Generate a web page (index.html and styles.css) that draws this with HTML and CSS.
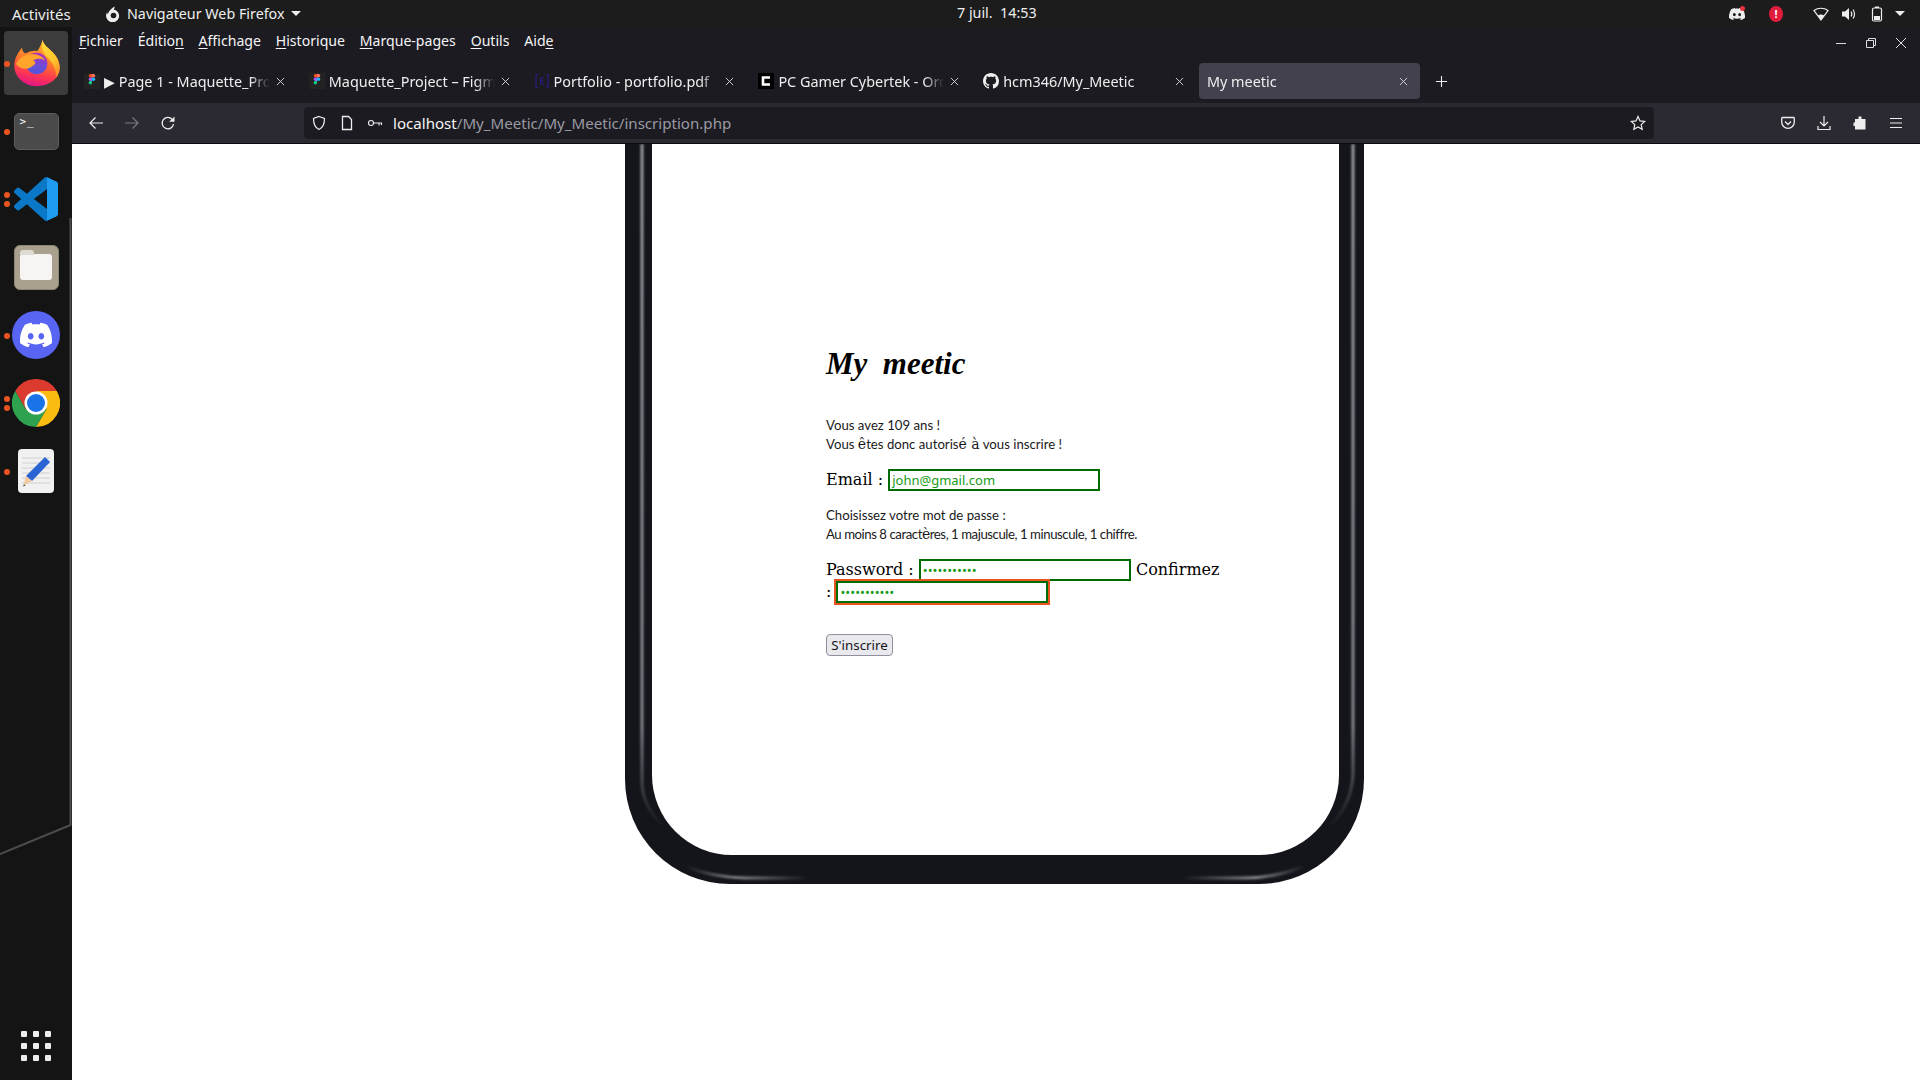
FILE: index.html
```html
<!DOCTYPE html>
<html lang="fr">
<head>
  <meta charset="UTF-8">
  <title>My meetic</title>
  <link rel="stylesheet" href="styles.css">
</head>
<body>

  <svg class="defs" width="0" height="0">
    <defs>
      <path id="discord" d="M20.317 4.3698a19.7913 19.7913 0 00-4.8851-1.5152.0741.0741 0 00-.0785.0371c-.211.3753-.4447.8648-.6083 1.2495-1.8447-.2762-3.68-.2762-5.4868 0-.1636-.3933-.4058-.8742-.6177-1.2495a.077.077 0 00-.0785-.037 19.7363 19.7363 0 00-4.8852 1.515.0699.0699 0 00-.0321.0277C.5334 9.0458-.319 13.5799.0992 18.0578a.0824.0824 0 00.0312.0561c2.0528 1.5076 4.0413 2.4228 5.9929 3.0294a.0777.0777 0 00.0842-.0276c.4616-.6304.8731-1.2952 1.226-1.9942a.076.076 0 00-.0416-.1057c-.6528-.2476-1.2743-.5495-1.8722-.8923a.077.077 0 01-.0076-.1277c.1258-.0943.2517-.1923.3718-.2914a.0743.0743 0 01.0776-.0105c3.9278 1.7933 8.18 1.7933 12.0614 0a.0739.0739 0 01.0785.0095c.1202.099.246.1981.3728.2924a.077.077 0 01-.0066.1276 12.2986 12.2986 0 01-1.873.8914.0766.0766 0 00-.0407.1067c.3604.698.7719 1.3628 1.225 1.9932a.076.076 0 00.0842.0286c1.961-.6067 3.9495-1.5219 6.0023-3.0294a.077.077 0 00.0313-.0552c.5004-5.177-.8382-9.6739-3.5485-13.6604a.061.061 0 00-.0312-.0286zM8.02 15.3312c-1.1825 0-2.1569-1.0857-2.1569-2.419 0-1.3332.9555-2.4189 2.157-2.4189 1.2108 0 2.1757 1.0952 2.1568 2.419 0 1.3332-.9555 2.4189-2.1569 2.4189zm7.9748 0c-1.1825 0-2.1569-1.0857-2.1569-2.419 0-1.3332.9554-2.4189 2.1569-2.4189 1.2108 0 2.1757 1.0952 2.1568 2.419 0 1.3332-.946 2.4189-2.1568 2.4189Z"/>
      <symbol id="croix" viewBox="0 0 10 10"><path stroke="#ddd" stroke-width="1" d="M1 1l8 8M9 1L1 9"/></symbol>
      <symbol id="figma" viewBox="0 0 16 16"><rect width="16" height="16" fill="#232323"/><path fill="#f24e1e" d="M8 1H6.500a1.700 1.700 0 0 0 0 3.500H8z"/><path fill="#ff7262" d="M8 1h1.500a1.700 1.700 0 0 1 0 3.500H8z"/><path fill="#a259ff" d="M8 4.500H6.500a1.700 1.700 0 0 0 0 3.500H8z"/><circle cx="9.500" cy="6.250" r="1.700" fill="#1abcfe"/><path fill="#0acf83" d="M8 8H6.500a1.700 1.700 0 1 0 1.500 1.750z"/></symbol>
    </defs>
  </svg>

  <div class="topbar">
    <span class="activites">Activités</span>
    <span class="appmenu">
      <svg class="appmenu-ico" viewBox="0 0 16 16"><path fill="#eee" d="M9.500 .5c.2 1.500-.3 2.300-.8 2.900A6.500 6.500 0 1 1 2 6.500c.2.700.6 1.200 1 1.500C3.500 5 6.500 2.500 9.500.5z"/><circle cx="8.500" cy="9.500" r="2.800" fill="#1c1c1c"/></svg>
      Navigateur Web Firefox
      <i class="caret"></i>
    </span>
    <span class="clock">7 juil.&nbsp; 14:53</span>
    <span class="status">
      <span class="st-discord">
        <svg viewBox="0 0 24 24"><use href="#discord" fill="#eee"/></svg>
        <i class="st-dot"></i>
      </span>
      <span class="st-alert">!</span>
      <svg class="st-ico" viewBox="0 0 16 16"><path fill="none" stroke="#eee" stroke-width="1.200" d="M1 4.500C5 1.500 11 1.500 15 4.500L8 14z"/><path fill="#eee" d="M4.800 9.500C7 8 9 8 11.200 9.500L8 14z"/></svg>
      <svg class="st-ico" viewBox="0 0 16 16"><path fill="#eee" d="M1 5.500h3L8 2v12L4 10.500H1z"/><path fill="none" stroke="#eee" stroke-width="1.200" d="M10 5.500c1 1.500 1 3.500 0 5M12 3.500c2 2.500 2 6.500 0 9"/></svg>
      <svg class="st-ico st-last" viewBox="0 0 16 16"><rect x="3.500" y="2" width="9" height="13" rx="1.500" fill="none" stroke="#eee" stroke-width="1.200"/><rect x="6" y="0.500" width="4" height="1.500" fill="#eee"/><rect x="5" y="10" width="6" height="4" fill="#eee"/></svg>
      <i class="caret"></i>
    </span>
  </div>

  <div class="desk">

    <div class="dock">
      <div class="dock-item dock-active">
        <i class="run"></i>
        <svg class="ico-firefox" viewBox="0 0 64 58">
          <defs>
            <linearGradient id="ffbody" x1="0.650" y1="0" x2="0.400" y2="1">
              <stop offset="0" stop-color="#ffb52e"/>
              <stop offset="0.450" stop-color="#ff7a2a"/>
              <stop offset="0.750" stop-color="#ff3750"/>
              <stop offset="1" stop-color="#e31587"/>
            </linearGradient>
            <linearGradient id="ffcroissant" x1="0.300" y1="0" x2="0.600" y2="1">
              <stop offset="0" stop-color="#ffd83a"/>
              <stop offset="0.600" stop-color="#ffc52e"/>
              <stop offset="1" stop-color="#ff8a2a"/>
            </linearGradient>
            <linearGradient id="ffglobe" x1="0.600" y1="0" x2="0.400" y2="1">
              <stop offset="0" stop-color="#b02cc0"/>
              <stop offset="0.600" stop-color="#6a4fd8"/>
              <stop offset="1" stop-color="#4f55dc"/>
            </linearGradient>
          </defs>
          <path fill="url(#ffbody)" d="M38 2C38 8 46 12 51 18C59 27 60 38 54 46C48 53 40 56 31 56C16 56 5 45 5 32C5 25 8 19 14 11C14 15 16 17 18 18C22 15 28 14 32 15C36 9 37 5 38 2Z"/>
          <path fill="url(#ffcroissant)" d="M38 2C38 8 46 12 51 18C59 27 60 38 54 46C54 38 50 28 43 22C38 18 36 10 38 2Z"/>
          <circle cx="31" cy="29.500" r="12.500" fill="url(#ffglobe)"/>
          <path fill="#ffa52c" d="M7 30C10 24 16 19 23 19C30 18 37 20 41 26C36 23 30 24 27 26C30 27 30 30 28 31C24 35 19 37 14 35C10 34 8 32 7 30Z"/>
        </svg>
      </div>
      <div class="dock-item">
        <i class="run"></i>
        <div class="ico-terminal">&gt;_</div>
      </div>
      <div class="dock-item">
        <i class="run run-double"></i>
        <svg class="ico-vscode" viewBox="0 0 100 100">
          <path fill="#0a78c6" fill-rule="evenodd" d="M70.900 99.300a6.200 6.200 0 0 0 5-.2l20.600-9.900a6.300 6.300 0 0 0 3.500-5.600V16.400a6.300 6.300 0 0 0-3.500-5.600L75.900.9a6.200 6.200 0 0 0-7.100 1.200L29.400 38.100 12.200 25a4.200 4.200 0 0 0-5.300.2l-5.500 5a4.200 4.200 0 0 0 0 6.200L16.300 50 1.400 63.600a4.200 4.200 0 0 0 0 6.200l5.500 5a4.200 4.200 0 0 0 5.300.2l17.200-13.100 39.400 36a6.200 6.200 0 0 0 2.100 1.400zM75 27.300 45.100 50 75 72.700V27.300z"/>
          <path fill="#1f9cf0" d="M75 .4l21.500 10.400a6.300 6.300 0 0 1 3.500 5.600v67.200a6.300 6.300 0 0 1-3.500 5.600L75 99.600z"/>
        </svg>
      </div>
      <div class="dock-item">
        <div class="ico-files"><div class="ico-folder"></div></div>
      </div>
      <div class="dock-item">
        <i class="run"></i>
        <div class="ico-discord">
          <svg viewBox="0 0 24 24"><use href="#discord" fill="#fff"/></svg>
        </div>
      </div>
      <div class="dock-item">
        <i class="run run-double"></i>
        <svg class="ico-chrome" viewBox="0 0 48 48">
          <path fill="#db3a2f" d="M3.200 12A24 24 0 0 1 44.800 12H24L13.600 30z"/>
          <path fill="#fbbc12" d="M44.800 12A24 24 0 0 1 24 48L34.400 30 24 12z"/>
          <path fill="#2fa24f" d="M24 48A24 24 0 0 1 3.200 12L13.600 30H34.400z"/>
          <circle cx="24" cy="24" r="11.500" fill="#fff"/>
          <circle cx="24" cy="24" r="9" fill="#1a73e8"/>
        </svg>
      </div>
      <div class="dock-item">
        <i class="run"></i>
        <svg class="ico-editor" viewBox="0 0 36 44">
          <rect width="36" height="44" rx="4" fill="#f1f1f1"/>
          <path stroke="#cfcfcf" stroke-width="1" d="M4 9h28M4 14h28M4 19h28M4 24h28M4 29h28M4 34h28"/>
          <path fill="#2a63d4" d="M27 8l5 5-18 19-6-5z"/>
          <path fill="#f2c9a0" d="M8 27l6 5-9 5z"/>
          <path fill="#333" d="M6.500 35.500l-2 2 3-1z"/>
        </svg>
      </div>
      <div class="dock-apps">
        <i></i><i></i><i></i><i></i><i></i><i></i><i></i><i></i><i></i>
      </div>
      <svg class="dock-edge" viewBox="0 0 72 1053"><path fill="none" stroke="#4c4c4c" stroke-width="2" d="M70.500 191V798L0 827"/></svg>
    </div>

    <div class="firefox">

      <div class="menubar">
        <span class="menu-item"><u>F</u>ichier</span>
        <span class="menu-item">Éditio<u>n</u></span>
        <span class="menu-item"><u>A</u>ffichage</span>
        <span class="menu-item"><u>H</u>istorique</span>
        <span class="menu-item"><u>M</u>arque-pages</span>
        <span class="menu-item"><u>O</u>utils</span>
        <span class="menu-item">Aid<u>e</u></span>
        <span class="winctl">
          <svg viewBox="0 0 12 12"><path stroke="#ddd" d="M1 6.500h10"/></svg>
          <svg viewBox="0 0 12 12"><path fill="none" stroke="#ddd" d="M1.500 3.500h7v7h-7zM3.500 3.500v-2h7v7h-2"/></svg>
          <svg viewBox="0 0 12 12"><path stroke="#ddd" d="M1 1l10 10M11 1L1 11"/></svg>
        </span>
      </div>

      <div class="tabs">
        <div class="tab">
          <svg class="fav"><use href="#figma"/></svg>
          <span class="tab-title">▶ Page 1 - Maquette_Project</span>
          <svg class="tab-close"><use href="#croix"/></svg>
        </div>
        <div class="tab">
          <svg class="fav"><use href="#figma"/></svg>
          <span class="tab-title">Maquette_Project – Figma</span>
          <svg class="tab-close"><use href="#croix"/></svg>
        </div>
        <div class="tab">
          <svg class="fav" viewBox="0 0 16 16"><path fill="none" stroke="#2a1f8f" d="M4 1.500H2v13h2M12 1.500h2v13h-2M10 5H6.500v6H10M6.500 8h3"/></svg>
          <span class="tab-title">Portfolio - portfolio.pdf</span>
          <svg class="tab-close"><use href="#croix"/></svg>
        </div>
        <div class="tab">
          <svg class="fav" viewBox="0 0 16 16"><rect width="16" height="16" fill="#000"/><path fill="none" stroke="#fff" stroke-width="2.600" d="M12 4.500H5v7h7"/></svg>
          <span class="tab-title">PC Gamer Cybertek - Ordinateur</span>
          <svg class="tab-close"><use href="#croix"/></svg>
        </div>
        <div class="tab">
          <svg class="fav" viewBox="0 0 16 16"><path fill="#eee" d="M8 0C3.580 0 0 3.580 0 8c0 3.540 2.290 6.530 5.470 7.590.4.070.55-.17.55-.38 0-.19-.01-.82-.01-1.490-2.010.37-2.530-.49-2.690-.94-.09-.23-.48-.94-.82-1.130-.28-.15-.68-.52-.01-.53.63-.01 1.080.58 1.230.82.72 1.210 1.870.87 2.330.66.07-.52.28-.87.51-1.070-1.780-.2-3.640-.89-3.640-3.950 0-.87.31-1.590.82-2.150-.08-.2-.36-1.020.08-2.120 0 0 .67-.21 2.200.82.64-.18 1.320-.27 2-.27.68 0 1.360.09 2 .27 1.530-1.040 2.200-.82 2.200-.82.44 1.100.16 1.920.08 2.120.51.56.82 1.270.82 2.150 0 3.070-1.870 3.750-3.650 3.950.29.25.54.73.54 1.480 0 1.070-.01 1.930-.01 2.200 0 .21.15.46.55.38A8.013 8.013 0 0016 8c0-4.420-3.580-8-8-8z"/></svg>
          <span class="tab-title">hcm346/My_Meetic</span>
          <svg class="tab-close"><use href="#croix"/></svg>
        </div>
        <div class="tab tab-active">
          <span class="tab-title">My meetic</span>
          <svg class="tab-close"><use href="#croix"/></svg>
        </div>
        <svg class="tab-new" viewBox="0 0 14 14"><path stroke="#eee" stroke-width="1.200" d="M7 1v12M1 7h12"/></svg>
      </div>

      <div class="navbar">
        <svg class="nav-ico" viewBox="0 0 16 16"><path fill="none" stroke="#eee" stroke-width="1.200" d="M15 8H2M7.500 2.500L2 8l5.500 5.500"/></svg>
        <svg class="nav-ico nav-off" viewBox="0 0 16 16"><path fill="none" stroke="#eee" stroke-width="1.200" d="M1 8h13M8.500 2.500L14 8l-5.500 5.500"/></svg>
        <svg class="nav-ico" viewBox="0 0 16 16"><path fill="none" stroke="#eee" stroke-width="1.300" d="M13.500 9a5.700 5.700 0 1 1-1.500-4.800l1.500 1.500"/><path fill="#eee" d="M14.500 1.500v5.300H9.200z"/></svg>
        <div class="urlbar">
          <svg class="url-ico" viewBox="0 0 16 16"><path fill="none" stroke="#eee" stroke-width="1.200" d="M8 1.500l5.500 2c0 5-1 9-5.500 11-4.500-2-5.500-6-5.500-11z"/></svg>
          <svg class="url-ico" viewBox="0 0 16 16"><path fill="none" stroke="#eee" stroke-width="1.300" d="M3.500 1.500h6l3 3v10h-9z"/></svg>
          <svg class="url-ico" viewBox="0 0 16 16"><circle cx="4" cy="8" r="2.500" fill="none" stroke="#eee" stroke-width="1.100"/><path fill="none" stroke="#eee" stroke-width="1.100" d="M6.500 8H15M12 8v2.500M14.500 8v2"/></svg>
          <span class="url"><b>localhost</b>/My_Meetic/My_Meetic/inscription.php</span>
          <svg class="url-star" viewBox="0 0 16 16"><path fill="none" stroke="#eee" stroke-width="1.200" d="M8 1.500l2 4.400 4.700.5-3.500 3.200 1 4.700L8 11.900l-4.200 2.400 1-4.700L1.300 6.400 6 5.900z"/></svg>
        </div>
        <div class="nav-right">
          <svg class="nav-ico" viewBox="0 0 16 16"><path fill="none" stroke="#eee" stroke-width="1.300" d="M2.500 2.500h11c.5 0 .8.300.8.800V7a6.300 6.300 0 0 1-12.600 0V3.300c0-.5.300-.8.800-.8z"/><path fill="none" stroke="#eee" stroke-width="1.300" d="M5 6.500L8 9.500l3-3"/></svg>
          <svg class="nav-ico" viewBox="0 0 16 16"><path fill="none" stroke="#eee" stroke-width="1.200" d="M8 1v10M4 7l4 4 4-4M2 11v3.500h12V11"/></svg>
          <svg class="nav-ico" viewBox="0 0 16 16"><path fill="#eee" d="M6.500 1.500h3v2.500h4v10.500H3V11H1.500V7.500H3V4h3.500z"/></svg>
          <svg class="nav-ico" viewBox="0 0 16 16"><path stroke="#eee" stroke-width="1.200" d="M2 3.500h12M2 8h12M2 12.500h12"/></svg>
        </div>
      </div>

      <div class="page">
        <div class="phone">
          <svg class="reflets" viewBox="0 0 739 740">
            <defs>
              <linearGradient id="refletV" gradientUnits="userSpaceOnUse" x1="0" y1="0" x2="0" y2="685">
                <stop offset="0" stop-color="#9a9aa2"/>
                <stop offset="0.850" stop-color="#85858e"/>
                <stop offset="1" stop-color="#85858e" stop-opacity="0"/>
              </linearGradient>
              <linearGradient id="refletH" gradientUnits="userSpaceOnUse" x1="60" y1="0" x2="680" y2="0">
                <stop offset="0" stop-color="#8a8a92" stop-opacity="0"/>
                <stop offset="0.080" stop-color="#8a8a92"/>
                <stop offset="0.200" stop-color="#8a8a92" stop-opacity="0"/>
                <stop offset="0.800" stop-color="#8a8a92" stop-opacity="0"/>
                <stop offset="0.920" stop-color="#8a8a92"/>
                <stop offset="1" stop-color="#8a8a92" stop-opacity="0"/>
              </linearGradient>
            </defs>
            <path class="reflet" stroke="url(#refletV)" d="M17 0V640Q18 662 38 682M728 0V630Q727 660 705 682"/>
            <path class="reflet" stroke="url(#refletH)" d="M60 722Q85 733 120 734H620Q650 734 680 722"/>
          </svg>
          <div class="ecran">
            <h1 class="logo">My&nbsp; meetic</h1>
            <p class="texte">Vous avez 109 ans !<br>Vous <span class="glyphe">ê</span>tes donc autoris<span class="glyphe">é à</span> vous inscrire !</p>
            <form class="formulaire" action="#">
              <div class="ligne">
                <label for="email">Email :</label>
                <input id="email" class="champ" type="text" value="john@gmail.com">
              </div>
              <p class="texte">Choisissez votre mot de passe :<br><span class="serre">Au moins 8 caract<span class="glyphe">è</span>res, 1 majuscule, 1 minuscule, 1 chiffre.</span></p>
              <div class="ligne ligne-mdp">
                <label for="mdp">Password :</label>
                <input id="mdp" class="champ" type="password" value="azertyuiop1">
                <label for="mdp2">Confirmez :</label>
                <input id="mdp2" class="champ champ-focus" type="password" value="azertyuiop1">
              </div>
              <button class="valider" type="button">S'inscrire</button>
            </form>
          </div>
        </div>
      </div>

    </div>
  </div>

</body>
</html>
```

FILE: styles.css
```css
* {
  margin: 0;
  padding: 0;
  box-sizing: border-box;
}

body {
  width: 1920px;
  height: 1080px;
  overflow: hidden;
  display: flex;
  flex-direction: column;
  font-family: "Noto Sans", sans-serif;
  font-size: 14.3px;
  color: #eee;
  background: #fff;
}

.defs {
  position: absolute;
}

/* barre du haut */
.topbar {
  height: 27px;
  flex: none;
  background: #1c1c1c;
  display: flex;
  align-items: center;
  position: relative;
  padding-left: 12px;
}

.activites {
  width: 93px;
  font-size: 15px;
}

.appmenu {
  display: flex;
  align-items: center;
  gap: 6px;
}

.appmenu-ico {
  width: 16px;
  height: 16px;
}

.caret {
  display: inline-block;
  width: 0;
  height: 0;
  border-left: 5px solid transparent;
  border-right: 5px solid transparent;
  border-top: 5px solid #eee;
}

.clock {
  position: absolute;
  left: 957px;
  top: 3px;
}

.status {
  margin-left: auto;
  display: flex;
  align-items: center;
  padding-right: 15px;
}

.st-discord {
  position: relative;
  width: 16px;
  height: 16px;
  margin-right: 24px;
}

.st-discord svg {
  display: block;
}

.st-dot {
  position: absolute;
  right: 0;
  top: 0;
  width: 5px;
  height: 5px;
  border-radius: 50%;
  background: #e8323c;
}

.st-alert {
  width: 14px;
  height: 16px;
  border-radius: 50%;
  background: #e01b3c;
  color: #fff;
  font-size: 11px;
  font-weight: 700;
  line-height: 16px;
  text-align: center;
  margin-right: 30px;
}

.st-ico {
  width: 16px;
  height: 16px;
  margin-right: 12px;
}

.st-last {
  margin-right: 10px;
}

/* dock */
.desk {
  flex: 1;
  display: flex;
  min-height: 0;
}

.dock {
  width: 72px;
  flex: none;
  background: #141414;
  display: flex;
  flex-direction: column;
  position: relative;
  padding-top: 2px;
}

.dock-item {
  height: 68px;
  flex: none;
  display: flex;
  align-items: center;
  justify-content: center;
  position: relative;
}

.dock-active::before {
  content: "";
  position: absolute;
  left: 4px;
  right: 4px;
  top: 2px;
  bottom: 2px;
  background: #3c3c3c;
  border-radius: 4px;
}

.run {
  position: absolute;
  left: 4px;
  top: 32px;
  width: 6px;
  height: 6px;
  border-radius: 50%;
  background: #e95420;
  z-index: 1;
}

.run-double {
  top: 27px;
  box-shadow: 0 9px 0 #e95420;
}

.ico-firefox {
  width: 55px;
  height: 50px;
  margin-left: 3px;
  position: relative;
}

.ico-terminal {
  width: 45px;
  height: 37px;
  background: #4a4a4a;
  border: 1px solid #5c5c5c;
  border-radius: 5px;
  font-family: "DejaVu Sans Mono", monospace;
  font-size: 11px;
  line-height: 15px;
  padding-left: 5px;
  color: #fff;
  letter-spacing: 1px;
}

.ico-vscode {
  width: 44px;
  height: 44px;
}

.ico-files {
  width: 45px;
  height: 45px;
  background: #a9a18e;
  border: 1px solid #8d8776;
  border-radius: 6px;
  display: flex;
  align-items: center;
  justify-content: center;
}

.ico-folder {
  width: 32px;
  height: 26px;
  background: #f6f5f3;
  border-radius: 3px;
  position: relative;
}

.ico-folder::before {
  content: "";
  position: absolute;
  left: 0;
  top: -4px;
  width: 14px;
  height: 5px;
  background: #dedbd2;
  border-radius: 3px 3px 0 0;
}

.ico-discord {
  width: 48px;
  height: 48px;
  border-radius: 50%;
  background: #5865f2;
  display: flex;
  align-items: center;
  justify-content: center;
}

.ico-discord svg {
  width: 32px;
  height: 32px;
}

.ico-chrome {
  width: 48px;
  height: 48px;
}

.ico-editor {
  width: 36px;
  height: 44px;
}

.dock-apps {
  margin-top: auto;
  margin-bottom: 19px;
  align-self: center;
  display: grid;
  grid-template-columns: repeat(3, 6px);
  gap: 6px;
}

.dock-apps i {
  display: block;
  width: 6px;
  height: 6px;
  border-radius: 1px;
  background: #eee;
}

.dock-edge {
  position: absolute;
  left: 0;
  top: 0;
  width: 72px;
  height: 1053px;
  pointer-events: none;
}

/* fenetre firefox */
.firefox {
  flex: 1;
  display: flex;
  flex-direction: column;
  min-width: 0;
}

.menubar {
  height: 35px;
  flex: none;
  background: #1c1b22;
  display: flex;
  align-items: center;
  padding: 0 0 8px 7px;
  gap: 14.8px;
  font-size: 14.1px;
  color: #f5f5f5;
}

.menu-item u {
  text-underline-offset: 2px;
}

.winctl {
  margin: 5px 0 0 auto;
  display: flex;
  gap: 18px;
  padding-right: 13px;
}

.winctl svg {
  width: 12px;
  height: 12px;
}

.tabs {
  height: 41px;
  flex: none;
  background: #1c1b22;
  display: flex;
  align-items: flex-start;
  padding-left: 3px;
  padding-top: 1px;
  font-size: 14.4px;
}

.tab {
  width: 224.8px;
  height: 36px;
  display: flex;
  align-items: center;
  padding: 0 9px;
  border-radius: 4px;
}

.tab-active {
  width: 221px;
  padding-left: 8px;
  background: #42414d;
}

.fav {
  width: 16px;
  height: 16px;
  flex: none;
  margin-right: 4px;
}

.tab-title {
  width: 166px;
  white-space: nowrap;
  overflow: hidden;
  -webkit-mask-image: linear-gradient(to right, #000 88%, transparent);
  mask-image: linear-gradient(to right, #000 88%, transparent);
}

.tab-close {
  width: 9px;
  height: 9px;
  margin-left: auto;
  margin-right: 6px;
}

.tab-active .tab-title {
  width: 170px;
}

.tab-active .tab-close {
  margin-right: 3px;
}

.tab-new {
  width: 13px;
  height: 13px;
  margin: 12px 0 0 15px;
}

.navbar {
  height: 41px;
  flex: none;
  background: #2b2a33;
  border-bottom: 1px solid #0c0c0d;
  display: flex;
  align-items: center;
  padding-left: 16px;
}

.nav-ico {
  width: 16px;
  height: 16px;
  flex: none;
  margin-right: 20px;
}

.nav-off {
  opacity: 0.4;
}

.urlbar {
  width: 1350px;
  height: 32px;
  flex: none;
  margin-left: 108px;
  background: #1c1b22;
  border-radius: 4px;
  display: flex;
  align-items: center;
  padding-left: 7px;
}

.url-ico {
  width: 16px;
  height: 16px;
  margin-right: 12px;
}

.url {
  font-size: 15.1px;
  color: #9a9aa2;
  margin-left: -2px;
}

.url b {
  font-weight: 400;
  color: #f5f5f5;
}

.url-star {
  width: 16px;
  height: 16px;
  margin-left: auto;
  margin-right: 8px;
}

.nav-right {
  display: flex;
  margin-left: 126px;
}

.nav-right .nav-ico:last-child {
  margin-right: 0;
}

/* page */
.page {
  flex: 1;
  background: #fff;
  display: flex;
  justify-content: center;
  padding-right: 3px;
  min-height: 0;
  color: #000;
}

.phone {
  width: 739px;
  height: 740px;
  background: #14141b;
  padding: 0 25px 29px 27px;
  border-radius: 0 0 105px 105px;
  position: relative;
}

.reflets {
  position: absolute;
  left: 0;
  top: 0;
  width: 739px;
  height: 740px;
}

.reflet {
  fill: none;
  stroke-width: 3;
  filter: blur(1px);
}

.ecran {
  height: 100%;
  background: #fff;
  border-radius: 0 0 80px 80px;
  padding: 194px 0 0 174px;
  position: relative;
}

.logo {
  font-family: "Liberation Serif", serif;
  font-style: italic;
  font-weight: 700;
  font-size: 31px;
  line-height: 52px;
  color: #000;
  margin-bottom: 26px;
}

.texte {
  font-family: "Lato", sans-serif;
  font-weight: 400;
  font-size: 13.2px;
  line-height: 19px;
  color: #1a1a1a;
}

.serre {
  letter-spacing: -0.45px;
}

.glyphe {
  font-family: "DejaVu Serif", serif;
  font-size: 14px;
  line-height: 1;
}

.formulaire {
  width: 400px;
}

.ligne {
  font-family: "DejaVu Serif", serif;
  font-size: 16px;
  line-height: 23px;
  margin: 14px 0 15px;
}

.ligne-mdp {
  margin: 15px 0 0;
  line-height: 22px;
}

.champ {
  width: 212px;
  height: 22px;
  border: 2px solid #006b00;
  padding: 0 2px;
  font-family: "Noto Sans", sans-serif;
  font-size: 13px;
  color: #159a15;
  background: #fff;
  vertical-align: baseline;
  outline: none;
}

.champ-focus {
  outline: 2px solid #e95420;
}

.valider {
  display: block;
  margin-top: 31px;
  width: 67px;
  height: 22px;
  font-family: "Noto Sans", sans-serif;
  font-size: 13.33px;
  color: #15141a;
  background: #e9e9ed;
  border: 1px solid #8f8f9d;
  border-radius: 4px;
}
```
